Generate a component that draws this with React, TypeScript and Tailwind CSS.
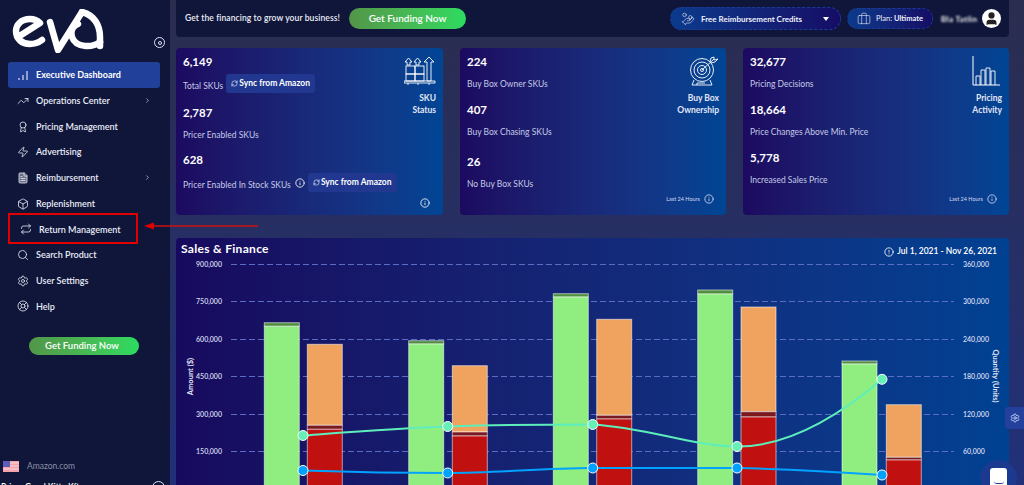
import {
  Award,
  Box,
  Briefcase,
  ChevronRight,
  CircleAlert,
  FileText,
  HandCoins,
  Info,
  LifeBuoy,
  RefreshCw,
  Repeat,
  Search,
  Settings,
  TrendingUp,
  User,
  Zap,
} from "lucide-react";

const menu = [
  { name: "Operations Center", icon: TrendingUp, more: true },
  { name: "Pricing Management", icon: Award },
  { name: "Advertising", icon: Zap },
  { name: "Reimbursement", icon: FileText, more: true, fill: "#6b7086" },
  { name: "Replenishment", icon: Box },
  { name: "Return Management", icon: Repeat, shifted: true },
  { name: "Search Product", icon: Search },
  { name: "User Settings", icon: Settings },
  { name: "Help", icon: LifeBuoy },
];

function FundingButton({ className }: { className: string }) {
  return (
    <div
      className={`flex shrink-0 items-center justify-center rounded-full bg-gradient-to-r from-[#519648] to-[#2bdb60] font-semibold text-white ${className}`}
    >
      Get Funding Now
    </div>
  );
}

function SyncButton() {
  return (
    <div className="ml-[3px] flex h-[19px] w-[89px] items-center justify-center gap-[1px] rounded-[3px] bg-[#22378f] text-[8.5px] font-bold text-white">
      <RefreshCw size={7} />
      Sync from Amazon
    </div>
  );
}

function Stat({ value, className }: { value: string; className?: string }) {
  return <div className={`text-[11.5px] leading-[16px] font-bold text-white ${className ?? ""}`}>{value}</div>;
}

function Label({ children, className }: { children: React.ReactNode; className?: string }) {
  return <div className={`text-[8.5px] leading-[12px] text-[#c6cbe6] ${className ?? ""}`}>{children}</div>;
}

function CardTitle({ lines, icon }: { lines: string[]; icon: React.ReactNode }) {
  return (
    <div className="flex flex-col items-end pr-[7px] pt-[8px] text-right text-[8.5px] leading-[12px] font-bold text-[#e3e6f5]">
      <div className="mb-[6px] h-[30px]">{icon}</div>
      {lines.map((l) => (
        <div key={l}>{l}</div>
      ))}
    </div>
  );
}

function Last24() {
  return (
    <div className="absolute right-[12px] bottom-[11px] flex items-center gap-[4px] text-[5.5px] text-[#d5d9ee]">
      Last 24 Hours
      <Info size={10} />
    </div>
  );
}

function SkuIcon() {
  return (
    <svg width="32" height="30" viewBox="0 0 32 30" fill="none" stroke="#fff" strokeWidth="0.9">
      <path d="M1 6l3.5-4L8 6H6v3H3V6zM10 6l3.5-4L17 6h-2v3h-3V6zM20 6l5-5 5 5h-3v19h-4V6z" />
      <rect x="2" y="10" width="9" height="8" />
      <rect x="11" y="10" width="9" height="8" />
      <rect x="2" y="18" width="9" height="7" />
      <rect x="11" y="18" width="9" height="7" />
      <path d="M0 25h31v2H0zM4 27v2M14 27v2M25 27v2" />
    </svg>
  );
}

function TargetIcon() {
  return (
    <svg width="30" height="30" viewBox="0 0 30 30" fill="none" stroke="#fff" strokeWidth="0.9">
      <circle cx="13" cy="14" r="11.5" />
      <circle cx="13" cy="14" r="8" />
      <circle cx="13" cy="14" r="4.5" />
      <circle cx="13" cy="14" r="1.5" />
      <path d="M13 14L25 3M21 6l1-4 3-1v3l4-1-3 3-4 1zM5 24l-2 5h20l-2-5M8 29v-2h8" />
    </svg>
  );
}

function ActivityIcon() {
  return (
    <svg width="30" height="30" viewBox="0 0 30 30" fill="none" stroke="#fff" strokeWidth="0.9">
      <path d="M1 0v29h27" strokeWidth="1" />
      <path d="M4 29V20h4v9M9 29V14h4v15M14 29V12h4v17M19 29V15h4v14" />
    </svg>
  );
}

function EvaLogo() {
  return (
    <svg width="92" height="44" viewBox="0 0 92 44" fill="none" stroke="#fff" strokeWidth="6.5" strokeLinecap="round" strokeLinejoin="round">
      <path d="M6 28L28 14C25 11 21 10 18 10 9 10 4 16 4 22c0 8 6 13 14 13 4 0 8-1 12-4" />
      <path d="M38 13l8 28L70 3" />
      <path d="M70 3C82 6 88 16 88 28V37" />
      <path d="M88 33C80 39 64 39 60 28 58 21 61 17 66 15" />
    </svg>
  );
}

const bars = [
  { x: 264.3, top: 322.7, cap: 326.3, ox: 307.3, oTop: 344.3, oEnd: 425.3, strip: 429.3 },
  { x: 408.7, top: 340.7, cap: 344, ox: 452.3, oTop: 365.7, oEnd: 432, strip: 436 },
  { x: 553.3, top: 293.7, cap: 297, ox: 596.7, oTop: 319.3, oEnd: 415.3, strip: 419 },
  { x: 697.7, top: 290, cap: 294, ox: 741, oTop: 307, oEnd: 411.7, strip: 417 },
  { x: 842, top: 361, cap: 364, ox: 886.3, oTop: 404.7, oEnd: 457.3, strip: 460 },
];

const grid = [
  { y: 264.5, left: "900,000", right: "360,000" },
  { y: 301.5, left: "750,000", right: "300,000" },
  { y: 339.5, left: "600,000", right: "240,000" },
  { y: 376.5, left: "450,000", right: "180,000" },
  { y: 414.5, left: "300,000", right: "120,000" },
  { y: 451.5, left: "150,000", right: "60,000" },
];

const teal = [
  [303, 435.5],
  [447.7, 426.5],
  [592.7, 424.5],
  [737, 446.5],
  [882, 379.3],
];
const blue = [
  [303, 470.5],
  [447.7, 473],
  [592.7, 468],
  [737, 468],
  [882, 475],
];

function Chart() {
  return (
    <svg width="833" height="225" viewBox="176 260 833 225" className="block" fontFamily="Lato, sans-serif">
      {grid.map((g) => (
        <g key={g.y}>
          <line x1="231" x2="954" y1={g.y} y2={g.y} stroke="#5a6cc4" strokeWidth="1" strokeDasharray="6 3" />
          <text x="222" y={g.y + 2.5} textAnchor="end" fontSize="7" fontWeight="600" fill="#d9ddf2">
            {g.left}
          </text>
          <text x="963" y={g.y + 2.5} fontSize="7" fontWeight="600" fill="#d9ddf2">
            {g.right}
          </text>
        </g>
      ))}
      <text transform="translate(193 376.5) rotate(-90)" textAnchor="middle" fontSize="7.5" fontWeight="700" fill="#e3e6f5">
        Amount ($)
      </text>
      <text transform="translate(993 376) rotate(90)" textAnchor="middle" fontSize="7.5" fontWeight="700" fill="#e3e6f5">
        Quantity (Units)
      </text>
      {bars.map((b) => (
        <g key={b.x} stroke="#ffffff" strokeOpacity="0.55" strokeWidth="1">
          <rect x={b.x} y={b.top} width="35" height={b.cap - b.top} fill="#4f8f3e" />
          <rect x={b.x} y={b.cap} width="35" height={490 - b.cap} fill="#90ee80" />
          <rect x={b.ox} y={b.oTop} width="35" height={b.oEnd - b.oTop} fill="#f0a35e" />
          <rect x={b.ox} y={b.oEnd} width="35" height={b.strip - b.oEnd} fill="#7a1a20" />
          <rect x={b.ox} y={b.strip} width="35" height={490 - b.strip} fill="#c11010" />
        </g>
      ))}
      <path
        d="M303 435.5C350 432 400 428 447.7 426.5S550 424.5 592.7 424.5C650 428 690 446 737 446.5C790 447 840 415 882 379.3"
        fill="none"
        stroke="#5eeebb"
        strokeWidth="2"
      />
      <path
        d="M303 470.5C350 472 400 473 447.7 473C500 473 540 468 592.7 468L737 468C790 469 840 472 882 475"
        fill="none"
        stroke="#00a2ff"
        strokeWidth="2"
      />
      {teal.map(([x, y]) => (
        <circle key={x} cx={x} cy={y} r="5" fill="#66f0b8" stroke="#fff" strokeWidth="1" />
      ))}
      {blue.map(([x, y]) => (
        <circle key={x} cx={x} cy={y} r="5" fill="#00a2ff" stroke="#fff" strokeWidth="1" />
      ))}
    </svg>
  );
}

export default function App() {
  return (
    <div className="relative flex h-[485px] w-[1024px] overflow-hidden bg-gradient-to-b from-[#2b2d4f] to-[#21307a] font-['Lato',sans-serif]">
      <aside className="flex h-[485px] w-[170px] shrink-0 flex-col overflow-hidden bg-[#0f1639]">
        <div className="relative h-[62px] shrink-0 pl-[12px] pt-[9px]">
          <EvaLogo />
          <div className="absolute left-[154px] top-[37px] flex h-[11px] w-[11px] items-center justify-center rounded-full border border-[#dfe3f5]">
            <div className="h-[4px] w-[4px] rounded-full border border-[#dfe3f5]" />
          </div>
        </div>
        <nav className="flex shrink-0 flex-col text-[9px] font-semibold text-[#e9ebf7]">
          <div className="mx-[8px] flex h-[26px] w-[152px] items-center rounded-[3px] bg-[#21409a] pl-[10px] font-bold text-white">
            <svg width="10" height="10" viewBox="0 0 10 10" stroke="#fff" strokeWidth="1" className="mr-[8px]">
              <path d="M1 10V8M5 10V5M9 10V1" />
            </svg>
            Executive Dashboard
          </div>
          {menu.map((m) => (
            <div
              key={m.name}
              className={`flex h-[25.7px] items-center ${m.shifted ? "pl-[20px]" : "pl-[17px]"}`}
            >
              <m.icon size={12} strokeWidth={1.6} fill={m.fill ?? "none"} className="mr-[7px] shrink-0" />
              {m.name}
              {m.more && <ChevronRight size={7} className="absolute left-[144px]" />}
            </div>
          ))}
        </nav>
        <FundingButton className="mx-[29px] mt-[18px] h-[18px] w-[110px] pr-[4px] text-[9.5px]" />
        <div className="mt-[106px] flex h-[11px] shrink-0 items-center pl-[3px] text-[8.5px] text-[#8a8fa8]">
          <svg width="16" height="11" viewBox="0 0 16 11" className="mr-[8px]">
            <rect width="16" height="11" fill="#f4a3ad" />
            <path d="M0 2h16M0 5h16M0 8h16" stroke="#f7d8dc" strokeWidth="1" />
            <rect width="7" height="6" fill="#5a5fb5" />
          </svg>
          Amazon.com
        </div>
        <div className="relative mt-[10px] shrink-0 pl-[1px] text-[8.5px] leading-[10px] font-semibold text-white">
          Prime Good Kitty Kft
          <div className="absolute left-[152px] top-[-1px] h-[13px] w-[13px] rounded-full border border-[#dfe3f5]" />
        </div>
      </aside>

      <main className="flex w-[854px] flex-col pl-[6px] pr-[15px]">
        <header className="flex h-[37px] shrink-0 items-center rounded-b-[4px] bg-[#0f1639] pl-[9px] pr-[8px]">
          <span className="text-[8.5px] font-semibold tracking-[0.1px] text-[#eceef8]">
            Get the financing to grow your business!
          </span>
          <FundingButton className="ml-[9px] h-[21px] w-[117px] text-[10px]" />
          <div className="ml-auto flex h-[23px] w-[171px] items-center rounded-full border border-dashed border-[#1c3a8f] bg-gradient-to-r from-[#0a3a8c] to-[#150c66] pl-[10px] pr-[11px] text-[8px] font-bold text-[#eef0fa]">
            <HandCoins size={14} strokeWidth={1} className="mr-[6px]" />
            Free Reimbursement Credits
            <div className="ml-auto h-0 w-0 border-x-[3.5px] border-t-[4px] border-x-transparent border-t-white" />
          </div>
          <div className="ml-[6px] flex h-[21px] w-[86px] items-center rounded-full border border-dashed border-[#1c3a8f] bg-gradient-to-r from-[#0a3a8c] to-[#150c66] pl-[9px] text-[7.5px] text-[#eef0fa]">
            <Briefcase size={14} strokeWidth={1} className="mr-[5px]" />
            Plan:&nbsp;<b>Ultimate</b>
          </div>
          <div className="ml-[8px] w-[33px] text-[8px] font-bold tracking-[0.4px] whitespace-nowrap text-white blur-[1px]">Bla Tatlin</div>
          <div className="ml-[8px] flex h-[19px] w-[19px] items-center justify-center rounded-full bg-white">
            <User size={15} fill="#222" stroke="#222" />
          </div>
        </header>

        <section className="mt-[11px] flex h-[167px] shrink-0 gap-[17px]">
          <div className="relative flex w-[267px] justify-between rounded-[4px] bg-gradient-to-r from-[#1c0a60] to-[#004595]">
            <div className="pl-[7px] pt-[6px]">
              <Stat value="6,149" />
              <div className="mt-[4px] flex items-center">
                <Label className="mt-[4px]">Total SKUs</Label>
                <SyncButton />
              </div>
              <Stat value="2,787" className="mt-[12px]" />
              <Label className="mt-[8px]">Pricer Enabled SKUs</Label>
              <Stat value="628" className="mt-[11px]" />
              <div className="mt-[5px] flex items-center">
                <Label className="mt-[4px]">Pricer Enabled In Stock SKUs</Label>
                <Info size={10} className="ml-[4px] text-white" />
                <SyncButton />
              </div>
            </div>
            <CardTitle lines={["SKU", "Status"]} icon={<SkuIcon />} />
            <Info size={10} className="absolute right-[13px] bottom-[7px] text-white" />
          </div>
          <div className="relative flex w-[266px] justify-between rounded-[4px] bg-gradient-to-r from-[#1c0a60] to-[#004595]">
            <div className="pl-[7px] pt-[6px]">
              <Stat value="224" />
              <Label className="mt-[8px]">Buy Box Owner SKUs</Label>
              <Stat value="407" className="mt-[12px]" />
              <Label className="mt-[8px]">Buy Box Chasing SKUs</Label>
              <Stat value="26" className="mt-[16px]" />
              <Label className="mt-[8px]">No Buy Box SKUs</Label>
            </div>
            <CardTitle lines={["Buy Box", "Ownership"]} icon={<TargetIcon />} />
            <Last24 />
          </div>
          <div className="relative flex w-[266px] justify-between rounded-[4px] bg-gradient-to-r from-[#1c0a60] to-[#004595]">
            <div className="pl-[7px] pt-[6px]">
              <Stat value="32,677" />
              <Label className="mt-[8px]">Pricing Decisions</Label>
              <Stat value="18,664" className="mt-[12px]" />
              <Label className="mt-[8px]">Price Changes Above Min. Price</Label>
              <Stat value="5,778" className="mt-[12px]" />
              <Label className="mt-[8px]">Increased Sales Price</Label>
            </div>
            <CardTitle lines={["Pricing", "Activity"]} icon={<ActivityIcon />} />
            <Last24 />
          </div>
        </section>

        <section className="mt-[23px] h-[260px] shrink-0 overflow-hidden rounded-t-[4px] bg-gradient-to-r from-[#170a5e] to-[#004192]">
          <div className="flex h-[22px] items-center justify-between pl-[5px] pr-[12px] text-white">
            <span className="text-[12px] font-bold tracking-[0.3px]">Sales &amp; Finance</span>
            <span className="mt-[5px] flex items-center gap-[3px] text-[8.5px] font-semibold">
              <CircleAlert size={10} />
              Jul 1, 2021 - Nov 26, 2021
            </span>
          </div>
          <Chart />
        </section>
      </main>

      {/* annotation over the sidebar */}
      <div className="absolute left-[8px] top-[213px] h-[31px] w-[130px] border-2 border-[#e00000]" />
      <svg width="114" height="8" viewBox="0 0 114 8" className="absolute left-[144px] top-[222px]">
        <path d="M114 4H8" stroke="#d01010" strokeWidth="1.4" />
        <path d="M0 4l10-3.5v7z" fill="#e00000" />
      </svg>

      <div className="absolute right-0 top-[407px] flex h-[22px] w-[19px] items-center justify-center rounded-l-[3px] bg-[#24409c]">
        <Settings size={10} className="text-[#cfe0ff]" />
      </div>
      <div className="absolute left-[980px] top-[460px] flex h-[37px] w-[37px] justify-center rounded-full bg-[#1b3a8f] pt-[8px]">
        <div className="flex h-[20px] w-[17px] items-end justify-center rounded-[3px] bg-white pb-[4px]">
          <div className="h-[3px] w-[10px] rounded-b-full border-b border-[#1b3a8f]" />
        </div>
      </div>
    </div>
  );
}
